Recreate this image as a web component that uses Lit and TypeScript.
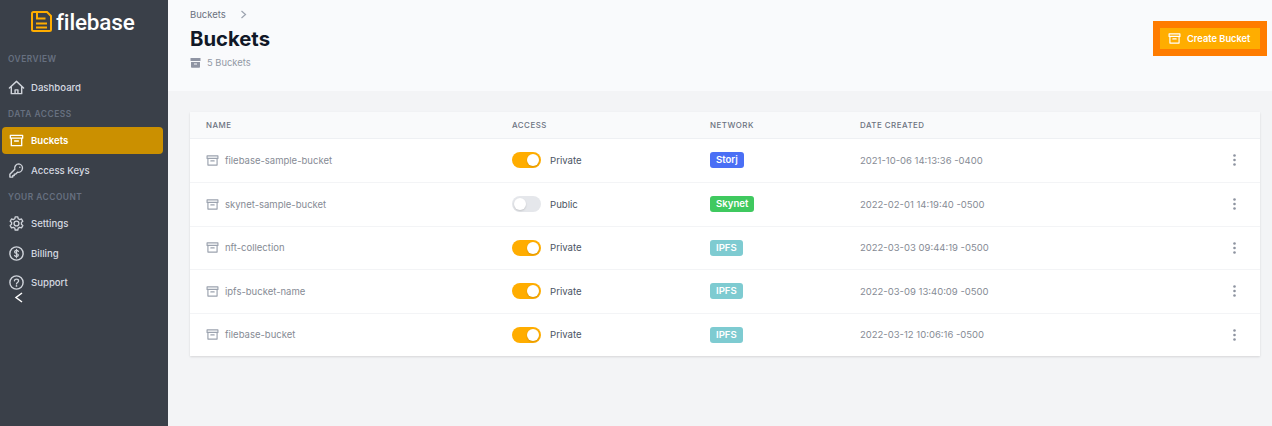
import { LitElement, html, css, svg } from "lit";
import { customElement } from "lit/decorators.js";

const box = svg`<path d="M2.500 3.500h13v3h-13zM3.500 6.500v8h11v-8M7 9.500h4" fill="none" stroke="currentColor" stroke-width="1.400" stroke-linejoin="round" stroke-linecap="round"/>`;

const icons: Record<string, unknown> = {
  home: svg`<path d="M1.500 9.500 9 2.500l7.500 7M3.500 8v7.500h11V8M7.500 15.500v-4h3v4" fill="none" stroke="currentColor" stroke-width="1.500" stroke-linejoin="round" stroke-linecap="round"/>`,
  box,
  key: svg`<path d="M11.500 2a4.500 4.500 0 0 0-4.300 5.800L2 13v3h3v-1.600h1.600v-1.600h1.600l1.900-1.900A4.500 4.500 0 1 0 11.500 2Z" fill="none" stroke="currentColor" stroke-width="1.500" stroke-linejoin="round"/><circle cx="12.500" cy="5.500" r=".8" fill="currentColor"/>`,
  gear: svg`<path d="M7.600 2h2.800l.4 2 1.600.9 1.900-.7 1.400 2.500-1.500 1.300v1.900l1.500 1.300-1.400 2.500-1.900-.7-1.600.9-.4 2H7.600l-.4-2-1.600-.9-1.900.7L2.300 11.200l1.500-1.300V8L2.300 6.700l1.400-2.500 1.900.7 1.600-.9Z" fill="none" stroke="currentColor" stroke-width="1.400" stroke-linejoin="round"/><circle cx="9" cy="9" r="2.600" fill="none" stroke="currentColor" stroke-width="1.400"/>`,
  dollar: svg`<circle cx="9" cy="9" r="7" fill="none" stroke="currentColor" stroke-width="1.500"/><path d="M11 6.800C10.600 6 9.800 5.800 9 5.800c-1.100 0-2 .5-2 1.500 0 2.200 4 1.200 4 3.400 0 1-.9 1.500-2 1.500-.9 0-1.700-.3-2-1.100M9 4.500v9" fill="none" stroke="currentColor" stroke-width="1.300" stroke-linecap="round"/>`,
  help: svg`<circle cx="9" cy="9" r="7" fill="none" stroke="currentColor" stroke-width="1.500"/><path d="M6.800 7.200C6.900 6 7.900 5.400 9 5.400c1.300 0 2.200.8 2.200 1.900 0 1.700-2.200 1.700-2.200 3.200" fill="none" stroke="currentColor" stroke-width="1.400" stroke-linecap="round"/><circle cx="9" cy="12.600" r=".9" fill="currentColor"/>`,
};

const nav = [
  { section: "OVERVIEW", items: [{ label: "Dashboard", icon: "home" }] },
  {
    section: "DATA ACCESS",
    items: [
      { label: "Buckets", icon: "box", active: true },
      { label: "Access Keys", icon: "key" },
    ],
  },
  {
    section: "YOUR ACCOUNT",
    items: [
      { label: "Settings", icon: "gear" },
      { label: "Billing", icon: "dollar" },
      { label: "Support", icon: "help" },
    ],
  },
];

const buckets = [
  { name: "filebase-sample-bucket", on: true, network: "Storj", date: "2021-10-06 14:13:36 -0400" },
  { name: "skynet-sample-bucket", on: false, network: "Skynet", date: "2022-02-01 14:19:40 -0500" },
  { name: "nft-collection", on: true, network: "IPFS", date: "2022-03-03 09:44:19 -0500" },
  { name: "ipfs-bucket-name", on: true, network: "IPFS", date: "2022-03-09 13:40:09 -0500" },
  { name: "filebase-bucket", on: true, network: "IPFS", date: "2022-03-12 10:06:16 -0500" },
];

@customElement("app-root")
export class AppRoot extends LitElement {
  static styles = css`
    :host {
      display: flex;
      width: 1272px;
      height: 426px;
      overflow: hidden;
      background: #f3f4f6;
      font-family: Inter, "Liberation Sans", sans-serif;
    }
    .sidebar {
      position: relative;
      flex: 0 0 168px;
      background: #3a4049;
      box-sizing: border-box;
    }
    .logo {
      display: flex;
      align-items: center;
      gap: 4px;
      height: 43px;
      padding-left: 31px;
      color: #fff;
      font-family: Roboto, sans-serif;
      font-size: 22.500px;
      font-weight: 500;
      letter-spacing: -0.15px;
    }
    .logo svg {
      width: 21px;
      height: 21px;
    }
    .section {
      font-size: 8.400px;
      font-weight: 600;
      letter-spacing: 0.5px;
      color: #677080;
      box-sizing: border-box;
      padding: 1px 0 0 8px;
      height: 12px;
      line-height: 12px;
    }
    .section.first {
      margin-top: 10px;
      padding-top: 0;
      height: 12.500px;
    }
    .items {
      display: flex;
      flex-direction: column;
      gap: 2.500px;
      padding: 8px 5px 6.500px 2px;
    }
    .item {
      display: flex;
      align-items: center;
      gap: 6px;
      height: 27px;
      padding-left: 6px;
      border-radius: 4px;
      color: #d5d9e0;
      font-size: 9.600px;
      font-weight: 500;
    }
    .item.active {
      background: #cb9000;
      color: #fff;
      font-weight: 600;
    }
    .item svg {
      width: 17px;
      height: 17px;
      flex: none;
      color: #cfd3da;
    }
    .item.active svg {
      color: #fff;
    }
    .collapse {
      position: absolute;
      left: 14px;
      top: 291px;
      width: 10px;
      height: 13px;
      color: #fff;
    }
    .main {
      flex: 1;
      min-width: 0;
    }
    .head {
      display: flex;
      justify-content: space-between;
      height: 91px;
      box-sizing: border-box;
      background: #f9fafc;
      padding: 8px 5px 0 22px;
    }
    .crumb {
      display: flex;
      align-items: center;
      gap: 14px;
      height: 12px;
      font-size: 9.500px;
      color: #6b7280;
    }
    .crumb svg {
      width: 7px;
      height: 9px;
      color: #9ca3af;
    }
    h1 {
      margin: 6px 0 0;
      font-size: 20.300px;
      line-height: 26px;
      font-weight: 700;
      color: #111827;
    }
    .count {
      display: flex;
      align-items: center;
      gap: 6px;
      margin-top: 5px;
      font-size: 9.400px;
      color: #9298a4;
    }
    .count svg {
      width: 11px;
      height: 11px;
      color: #8f94a3;
    }
    .create {
      display: flex;
      align-items: center;
      gap: 5px;
      align-self: flex-start;
      margin-top: 13px;
      height: 35px;
      width: 114px;
      box-sizing: border-box;
      padding-left: 7px;
      background: #ffad00;
      border: 7px solid #ff7c00;
      color: #fff;
      font-size: 9.300px;
      font-weight: 600;
    }
    .create svg {
      width: 15px;
      height: 15px;
    }
    .card {
      margin: 21px 12px 0 22px;
      background: #fff;
      box-shadow: 0 1px 2px rgba(0, 0, 0, 0.12);
    }
    .row {
      display: grid;
      grid-template-columns: 306px 198px 150px 1fr 27px;
      align-items: center;
      padding-left: 16px;
      height: 43.500px;
      box-sizing: border-box;
      border-top: 1px solid #f3f4f6;
      font-size: 9.500px;
      color: #868b95;
    }
    .row.header {
      height: 26.500px;
      border-top: 0;
      background: #f9fafb;
      border-bottom: 1px solid #eef0f3;
      font-size: 7.900px;
      font-weight: 500;
      letter-spacing: 0.5px;
      color: #6b7280;
    }
    .row.header + .row {
      border-top: 0;
    }
    .name {
      display: flex;
      align-items: center;
      gap: 4px;
      margin-left: -1px;
    }
    .name svg {
      width: 15px;
      height: 15px;
      color: #9ca3af;
    }
    .name span {
      margin-left: 1px;
    }
    .access {
      display: flex;
      align-items: center;
      gap: 9px;
      color: #4b5563;
      font-size: 9.600px;
    }
    .toggle {
      width: 29px;
      height: 16px;
      padding: 2px;
      box-sizing: border-box;
      border-radius: 8px;
      background: #e5e7eb;
    }
    .toggle.on {
      background: #ffad00;
    }
    .toggle i {
      display: block;
      width: 12px;
      height: 12px;
      border-radius: 50%;
      background: #fff;
      box-shadow: 0 1px 2px rgba(0, 0, 0, 0.15);
    }
    .toggle.on i {
      margin-left: 13px;
    }
    .badge {
      justify-self: start;
      padding: 0 6px;
      height: 16px;
      line-height: 16px;
      border-radius: 3px;
      color: #fff;
      font-size: 9.600px;
      font-weight: 600;
    }
    .Storj {
      background: #4a6ff5;
    }
    .Skynet {
      background: #3fc95f;
    }
    .IPFS {
      background: #7ecbd1;
    }
    .dots {
      width: 3px;
      color: #8d93a0;
    }
  `;

  renderRow(b: (typeof buckets)[number]) {
    return html`
      <div class="row">
        <div class="name">
          <svg viewBox="0 0 18 18">${box}</svg>
          <span>${b.name}</span>
        </div>
        <div class="access">
          <div class="toggle ${b.on ? "on" : ""}"><i></i></div>
          <span>${b.on ? "Private" : "Public"}</span>
        </div>
        <span class="badge ${b.network}">${b.network}</span>
        <span>${b.date}</span>
        <svg class="dots" viewBox="0 0 3 12" height="12">
          <circle cx="1.500" cy="1.500" r="1.300" fill="currentColor"></circle>
          <circle cx="1.500" cy="6" r="1.300" fill="currentColor"></circle>
          <circle cx="1.500" cy="10.500" r="1.300" fill="currentColor"></circle>
        </svg>
      </div>
    `;
  }

  render() {
    return html`
      <aside class="sidebar">
        <div class="logo">
          <svg viewBox="0 0 21 21">
            <path d="M2.500 1h13.500l4 4v13.500a1.500 1.500 0 0 1-1.500 1.500h-16A1.500 1.500 0 0 1 1 18.500V2.500A1.500 1.500 0 0 1 2.500 1Z" fill="none" stroke="#ffad00" stroke-width="2"></path>
            <path d="M6 2v5.500h8.500M5 12.500h11M5 16.500h11" fill="none" stroke="#ffad00" stroke-width="2"></path>
          </svg>
          <span>filebase</span>
        </div>
        ${nav.map(
          (group, i) => html`
            <div class="section ${i === 0 ? "first" : ""}">${group.section}</div>
            <div class="items">
              ${group.items.map(
                (item) => html`
                  <div class="item ${"active" in item && item.active ? "active" : ""}">
                    <svg viewBox="0 0 18 18">${icons[item.icon]}</svg>
                    <span>${item.label}</span>
                  </div>
                `
              )}
            </div>
          `
        )}
        <svg class="collapse" viewBox="0 0 10 13">
          <path d="M8 2 2 6.500 8 11" fill="none" stroke="currentColor" stroke-width="1.500"></path>
        </svg>
      </aside>
      <main class="main">
        <header class="head">
          <div>
            <div class="crumb">
              <span>Buckets</span>
              <svg viewBox="0 0 7 9"><path d="M1.500 1 5.500 4.500 1.500 8" fill="none" stroke="currentColor" stroke-width="1.200"></path></svg>
            </div>
            <h1>Buckets</h1>
            <div class="count">
              <svg viewBox="0 0 11 11"><path d="M.500 1h10v3H.500zM1 5h9v5a.8.8 0 0 1-.8.8H1.800A.8.8 0 0 1 1 10Zm3 1.500v1h3v-1Z" fill="currentColor" fill-rule="evenodd"></path></svg>
              <span>5 Buckets</span>
            </div>
          </div>
          <div class="create">
            <svg viewBox="0 0 18 18">${box}</svg>
            <span>Create Bucket</span>
          </div>
        </header>
        <section class="card">
          <div class="row header">
            <span>NAME</span>
            <span>ACCESS</span>
            <span>NETWORK</span>
            <span>DATE CREATED</span>
          </div>
          ${buckets.map((b) => this.renderRow(b))}
        </section>
      </main>
    `;
  }
}
